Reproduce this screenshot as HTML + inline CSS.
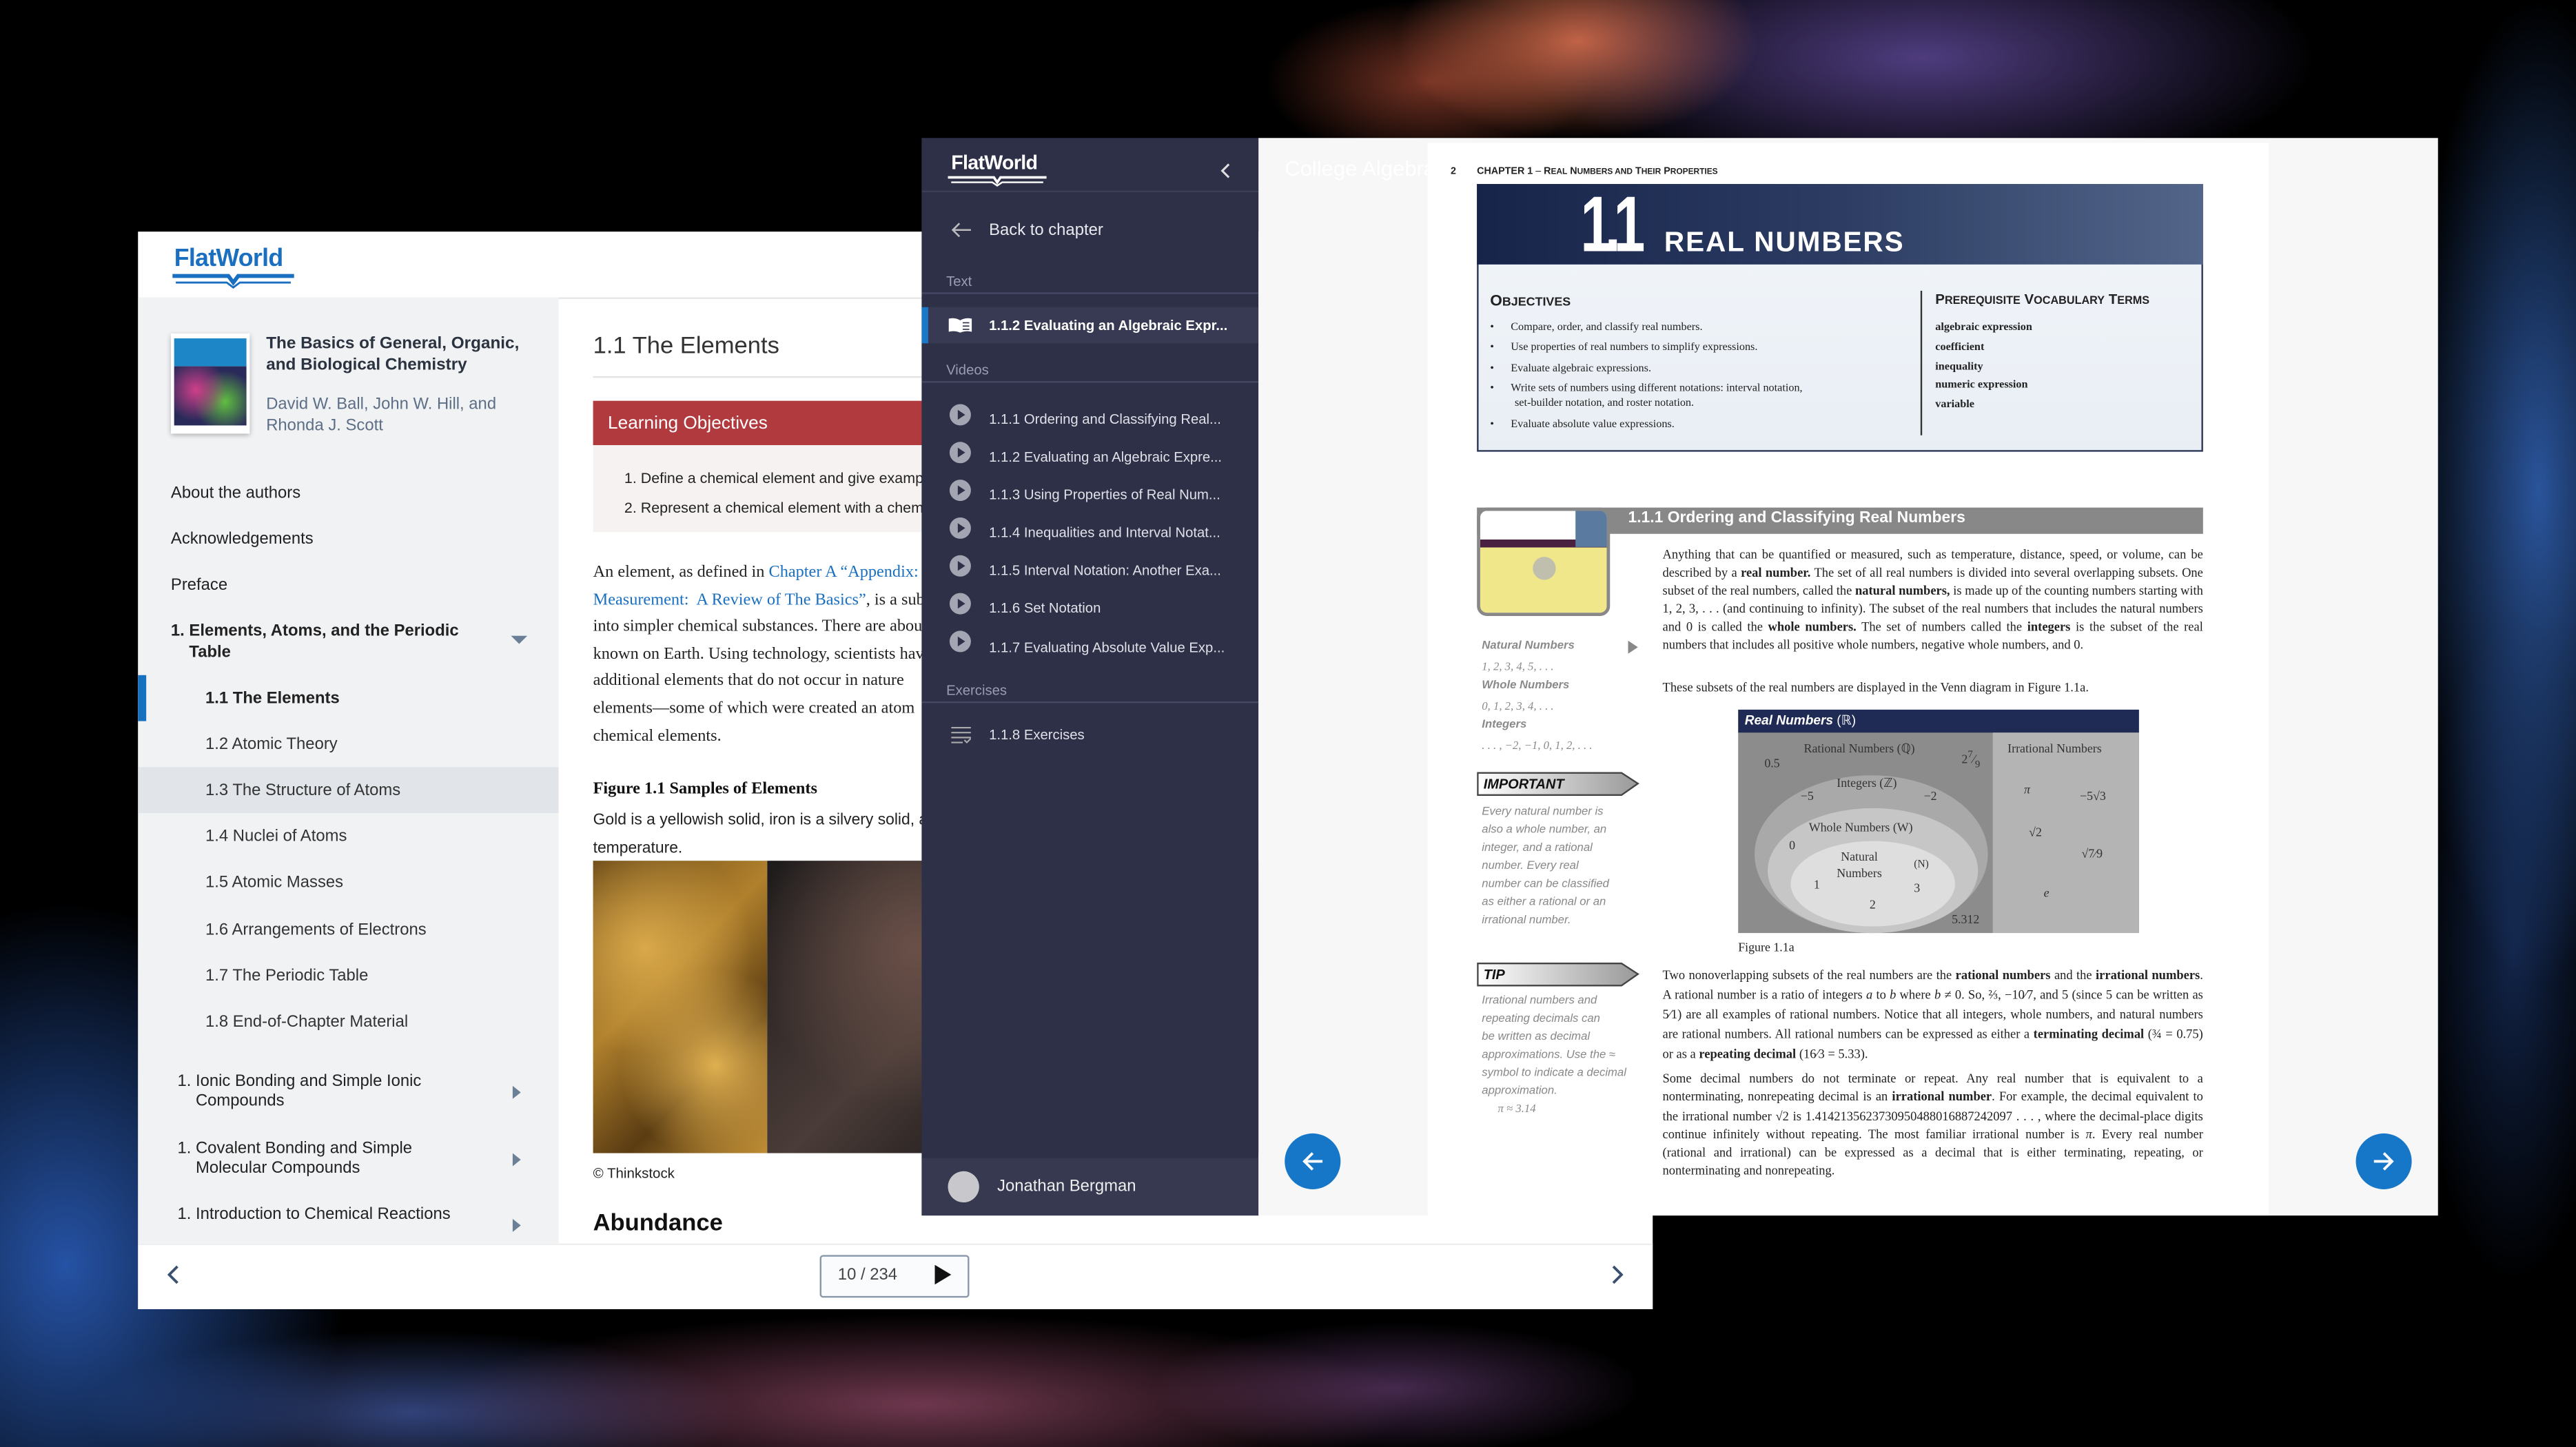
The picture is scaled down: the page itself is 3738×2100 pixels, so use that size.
<!DOCTYPE html>
<html><head><meta charset="utf-8">
<style>
*{margin:0;padding:0;box-sizing:border-box}
html,body{width:3738px;height:2100px;overflow:hidden;background:#000}
#s{position:absolute;left:0;top:0;width:1568px;height:881px;transform:scale(2.38393);transform-origin:0 0;overflow:hidden;font-family:"Liberation Sans",sans-serif;
background:
radial-gradient(ellipse 110px 60px at 960px 25px,rgba(255,130,90,.75),transparent),
radial-gradient(ellipse 240px 80px at 1170px 35px,rgba(130,100,210,.6),transparent),
radial-gradient(ellipse 100px 50px at 870px 50px,rgba(230,100,70,.5),transparent),
radial-gradient(ellipse 80px 300px at 1545px 300px,rgba(60,120,220,.7),transparent),
radial-gradient(ellipse 60px 200px at 1530px 580px,rgba(40,80,160,.45),transparent),
radial-gradient(ellipse 170px 220px at 40px 770px,rgba(50,110,220,.75),transparent),
radial-gradient(ellipse 300px 55px at 560px 855px,rgba(200,100,140,.55),transparent),
radial-gradient(ellipse 200px 50px at 250px 860px,rgba(90,120,220,.55),transparent),
radial-gradient(ellipse 150px 40px at 850px 845px,rgba(150,90,170,.45),transparent),
#000}
.a{position:absolute;white-space:nowrap}
.srf{font-family:"Liberation Serif",serif}
</style></head><body><div id="s">

<!-- LEFT WINDOW -->
<div class="a" style="left:84px;top:141px;width:922px;height:656px;background:#fff;overflow:hidden">
  <div class="a" style="left:22px;top:8px;font-size:15px;font-weight:bold;color:#1a6fc0;letter-spacing:-.3px">FlatWorld</div>
  <svg class="a" style="left:19px;top:25px" width="78" height="10" viewBox="0 0 78 10"><path d="M2 2 L36 2 L39 6 L42 2 L76 2" stroke="#1a6fc0" stroke-width="2.4" fill="none"/><path d="M4 6 L35 6 L39 9 L43 6 L74 6" stroke="#1a6fc0" stroke-width="1.2" fill="none"/></svg>
  <div class="a" style="left:0;top:40px;width:256px;height:576px;background:#f1f2f4"></div>
  <div class="a" style="left:256px;top:40px;width:666px;height:1px;background:#e6e6e6"></div>
  <div class="a" style="left:20px;top:62px;width:48px;height:61px;background:#fff;box-shadow:0 1px 3px rgba(0,0,0,.3)">
    <div class="a" style="left:2px;top:3px;width:44px;height:17px;background:#1d86c7"></div>
    <div class="a" style="left:2px;top:20px;width:44px;height:36px;background:radial-gradient(circle at 30% 40%,#d0408a,transparent 50%),radial-gradient(circle at 70% 60%,#60c040,transparent 50%),#2a2a5a"></div>
  </div>
  <div class="a" style="left:78px;top:63px;font-size:10.2px;font-weight:bold;color:#2c3340;line-height:12.5px">The Basics of General, Organic,<br>and Biological Chemistry</div>
  <div class="a" style="left:78px;top:100px;font-size:10px;color:#5d6f86;line-height:12.5px">David W. Ball, John W. Hill, and<br>Rhonda J. Scott</div>
  <div class="a" style="left:20px;top:154px;font-size:10px;color:#222">About the authors</div>
  <div class="a" style="left:20px;top:182px;font-size:10px;color:#222">Acknowledgements</div>
  <div class="a" style="left:20px;top:210px;font-size:10px;color:#222">Preface</div>
  <div class="a" style="left:20px;top:238px;font-size:10px;font-weight:bold;color:#222;line-height:12.5px">1. Elements, Atoms, and the Periodic<br>&nbsp;&nbsp;&nbsp;&nbsp;Table</div>
  <svg class="a" style="left:227px;top:246px" width="10" height="6"><path d="M0 0 L10 0 L5 5Z" fill="#6b7f96"/></svg>
  <div class="a" style="left:0;top:270px;width:5px;height:28px;background:#1570c0"></div>
  <div class="a" style="left:0;top:326px;width:256px;height:28px;background:#e1e4e8"></div>
  <div class="a" style="left:41px;top:279px;font-size:10px;font-weight:bold;color:#222">1.1 The Elements</div>
  <div class="a" style="left:41px;top:307px;font-size:10px;color:#333">1.2 Atomic Theory</div>
  <div class="a" style="left:41px;top:335px;font-size:10px;color:#333">1.3 The Structure of Atoms</div>
  <div class="a" style="left:41px;top:363px;font-size:10px;color:#333">1.4 Nuclei of Atoms</div>
  <div class="a" style="left:41px;top:391px;font-size:10px;color:#333">1.5 Atomic Masses</div>
  <div class="a" style="left:41px;top:420px;font-size:10px;color:#333">1.6 Arrangements of Electrons</div>
  <div class="a" style="left:41px;top:448px;font-size:10px;color:#333">1.7 The Periodic Table</div>
  <div class="a" style="left:41px;top:476px;font-size:10px;color:#333">1.8 End-of-Chapter Material</div>
  <div class="a" style="left:24px;top:512px;font-size:10px;color:#222;line-height:12px">1. Ionic Bonding and Simple Ionic<br>&nbsp;&nbsp;&nbsp;&nbsp;Compounds</div>
  <div class="a" style="left:24px;top:553px;font-size:10px;color:#222;line-height:12px">1. Covalent Bonding and Simple<br>&nbsp;&nbsp;&nbsp;&nbsp;Molecular Compounds</div>
  <div class="a" style="left:24px;top:593px;font-size:10px;color:#222">1. Introduction to Chemical Reactions</div>
  <svg class="a" style="left:228px;top:520px" width="6" height="8"><path d="M0 0 L5 4 L0 8Z" fill="#6b7f96"/></svg>
  <svg class="a" style="left:228px;top:561px" width="6" height="8"><path d="M0 0 L5 4 L0 8Z" fill="#6b7f96"/></svg>
  <svg class="a" style="left:228px;top:601px" width="6" height="8"><path d="M0 0 L5 4 L0 8Z" fill="#6b7f96"/></svg>
  <div class="a" style="left:277px;top:62px;font-size:14.5px;color:#333">1.1 The Elements</div>
  <div class="a" style="left:277px;top:88px;width:400px;height:1px;background:#e3e3e3"></div>
  <div class="a" style="left:277px;top:103px;width:400px;height:27px;background:#b13a3f"></div>
  <div class="a" style="left:286px;top:111px;font-size:11px;color:#fff">Learning Objectives</div>
  <div class="a" style="left:277px;top:130px;width:400px;height:53px;background:#f7f2f2"></div>
  <div class="a" style="left:296px;top:145px;font-size:9px;color:#222">1. Define a chemical element and give examples</div>
  <div class="a" style="left:296px;top:163px;font-size:9px;color:#222">2. Represent a chemical element with a chemical symbol</div>
  <div class="a srf" style="left:277px;top:200px;font-size:10.2px;color:#222;line-height:16.6px">An element, as defined in <span style="color:#1a6fc0">Chapter A “Appendix:</span><br><span style="color:#1a6fc0">Measurement:&nbsp; A Review of The Basics”</span>, is a substance<br>into simpler chemical substances. There are about<br>known on Earth. Using technology, scientists have<br>additional elements that do not occur in nature<br>elements—some of which were created an atom<br>chemical elements.</div>
  <div class="a srf" style="left:277px;top:334px;font-size:10.2px;font-weight:bold;color:#111">Figure 1.1 Samples of Elements</div>
  <div class="a" style="left:277px;top:351px;font-size:9.6px;color:#222;line-height:16.6px">Gold is a yellowish solid, iron is a silvery solid, and<br>temperature.</div>
  <div class="a" style="left:277px;top:383px;width:106px;height:178px;background:radial-gradient(circle at 30% 30%,#d9a84a,transparent 45%),radial-gradient(circle at 70% 70%,#e0b050,transparent 40%),linear-gradient(135deg,#6a4a18,#b0802c 40%,#5a3c12 70%,#c08e34)"></div>
  <div class="a" style="left:383px;top:383px;width:300px;height:178px;background:radial-gradient(circle at 30% 30%,#6a5048,transparent 40%),radial-gradient(circle at 60% 70%,#504a4a,transparent 40%),linear-gradient(135deg,#1c1a1a,#4a3c38 40%,#1a1818 70%,#3a3030)"></div>
  <div class="a" style="left:277px;top:568px;font-size:8.6px;color:#222">© Thinkstock</div>
  <div class="a" style="left:277px;top:596px;font-size:14.5px;font-weight:bold;color:#111">Abundance</div>
  <div class="a" style="left:0;top:616px;width:922px;height:40px;background:#fff;border-top:1px solid #eee"></div>
  <svg class="a" style="left:18px;top:629px" width="8" height="12"><path d="M6 1 L1 6 L6 11" stroke="#3a5070" stroke-width="1.6" fill="none"/></svg>
  <svg class="a" style="left:896px;top:629px" width="8" height="12"><path d="M2 1 L7 6 L2 11" stroke="#3a5070" stroke-width="1.6" fill="none"/></svg>
  <div class="a" style="left:415px;top:623px;width:91px;height:26px;border:1px solid #8898aa;border-radius:2px;background:#fafbfc"></div>
  <div class="a" style="left:426px;top:630px;font-size:10px;color:#444">10 / 234</div>
  <svg class="a" style="left:485px;top:629px" width="10" height="12"><path d="M0 0 L10 6 L0 12Z" fill="#111"/></svg>
</div>

<!-- RIGHT READER -->
<div class="a" style="left:766px;top:84px;width:718px;height:656px;background:#f7f7f7;overflow:hidden">
  <div class="a" style="left:16px;top:11px;font-size:13px;color:#fff">College Algebra</div>
  <div class="a" style="left:103px;top:3px;width:512px;height:653px;background:#fff"></div>
  <div class="a" style="left:16px;top:606px;width:34px;height:34px;border-radius:50%;background:#1676c8"></div>
  <svg class="a" style="left:25px;top:615px" width="16" height="16"><path d="M14 8 H3 M8 3 L3 8 L8 13" stroke="#fff" stroke-width="1.6" fill="none"/></svg>
  <div class="a" style="left:668px;top:606px;width:34px;height:34px;border-radius:50%;background:#1676c8"></div>
  <svg class="a" style="left:677px;top:615px" width="16" height="16"><path d="M2 8 H13 M8 3 L13 8 L8 13" stroke="#fff" stroke-width="1.6" fill="none"/></svg>
</div>

<!-- PAGE CONTENT -->
<div class="a" style="left:883px;top:102px;font-size:6px;font-weight:bold;color:#222">2</div>
<div class="a" style="left:899px;top:102px;font-size:6px;font-weight:bold;color:#222">CHAPTER 1 <span style="font-weight:normal">–</span> R<span style="font-size:5px">EAL</span> N<span style="font-size:5px">UMBERS AND</span> T<span style="font-size:5px">HEIR</span> P<span style="font-size:5px">ROPERTIES</span></div>
<div class="a" style="left:899px;top:112px;width:442px;height:163px;border:1px solid #2a3656;background:linear-gradient(180deg,#f2f6fa,#e9eef5)"></div>
<div class="a" style="left:899px;top:112px;width:442px;height:49px;background:linear-gradient(90deg,#17244a,#2c3c62 50%,#53668a)"></div>
<div class="a" style="left:962px;top:110px;font-size:48px;font-weight:bold;color:#fff;letter-spacing:-6px;transform:scaleX(.72);transform-origin:left">1.1</div>
<div class="a" style="left:1013px;top:138px;font-size:17px;font-weight:bold;color:#fff;letter-spacing:.8px">REAL NUMBERS</div>
<div class="a" style="left:907px;top:178px;font-size:9.5px;font-weight:bold;color:#222">O<span style="font-size:7.5px">BJECTIVES</span></div>
<div class="a srf" style="left:907px;top:194px;font-size:6.8px;color:#222;line-height:12.4px">•&nbsp;&nbsp;&nbsp;&nbsp;&nbsp;&nbsp;Compare, order, and classify real numbers.<br>•&nbsp;&nbsp;&nbsp;&nbsp;&nbsp;&nbsp;Use properties of real numbers to simplify expressions.<br>•&nbsp;&nbsp;&nbsp;&nbsp;&nbsp;&nbsp;Evaluate algebraic expressions.<br>•&nbsp;&nbsp;&nbsp;&nbsp;&nbsp;&nbsp;Write sets of numbers using different notations: interval notation,</div>
<div class="a srf" style="left:922px;top:242px;font-size:6.8px;color:#222">set-builder notation, and roster notation.</div>
<div class="a srf" style="left:907px;top:255px;font-size:6.8px;color:#222">•&nbsp;&nbsp;&nbsp;&nbsp;&nbsp;&nbsp;Evaluate absolute value expressions.</div>
<div class="a" style="left:1169px;top:177px;width:1px;height:88px;background:#333"></div>
<div class="a" style="left:1178px;top:177px;font-size:8.6px;font-weight:bold;color:#222">P<span style="font-size:6.8px">REREQUISITE</span> V<span style="font-size:6.8px">OCABULARY</span> T<span style="font-size:6.8px">ERMS</span></div>
<div class="a srf" style="left:1178px;top:194px;font-size:6.8px;font-weight:bold;color:#222;line-height:11.8px">algebraic expression<br>coefficient<br>inequality<br>numeric expression<br>variable</div>

<div class="a" style="left:899px;top:309px;width:442px;height:16px;background:#888"></div>
<div class="a" style="left:991px;top:310px;font-size:9.6px;font-weight:bold;color:#fff">1.1.1 Ordering and Classifying Real Numbers</div>
<div class="a" style="left:899px;top:309px;width:81px;height:66px;border-radius:6px;border:2px solid #888;background:linear-gradient(180deg,#fff 0 28%,#4a2040 28% 36%,#f0e68a 36%);overflow:hidden">
  <div class="a" style="left:58px;top:0;width:20px;height:22px;background:#5a7aa0"></div>
  <div class="a" style="left:32px;top:28px;width:14px;height:14px;border-radius:50%;background:rgba(180,180,180,.8)"></div>
</div>
<div class="a" style="left:902px;top:388px;font-size:7px;font-style:italic;font-weight:bold;color:#8a8a8a;line-height:12px">Natural Numbers<br><span class="srf" style="font-weight:normal">1, 2, 3, 4, 5, . . .</span></div>
<div class="a" style="left:902px;top:412px;font-size:7px;font-style:italic;font-weight:bold;color:#8a8a8a;line-height:12px">Whole Numbers<br><span class="srf" style="font-weight:normal">0, 1, 2, 3, 4, . . .</span></div>
<div class="a" style="left:902px;top:436px;font-size:7px;font-style:italic;font-weight:bold;color:#8a8a8a;line-height:12px">Integers<br><span class="srf" style="font-weight:normal">. . . , −2, −1, 0, 1, 2, . . .</span></div>
<svg class="a" style="left:991px;top:390px" width="6" height="8"><path d="M0 0 L6 4 L0 8Z" fill="#888"/></svg>
<svg class="a" style="left:899px;top:470px" width="100" height="15"><defs><linearGradient id="g"><stop offset="0" stop-color="#fff"/><stop offset="1" stop-color="#999"/></linearGradient></defs><path d="M0.5 0.5 H88 L98 7 L88 14 H0.5Z" fill="url(#g)" stroke="#444"/></svg>
<div class="a" style="left:903px;top:472px;font-size:8.4px;font-weight:bold;font-style:italic;color:#111">IMPORTANT</div>
<div class="a" style="left:902px;top:489px;font-size:7px;font-style:italic;color:#888;line-height:11px">Every natural number is<br>also a whole number, an<br>integer, and a rational<br>number. Every real<br>number can be classified<br>as either a rational or an<br>irrational number.</div>
<svg class="a" style="left:899px;top:586px" width="100" height="15"><path d="M0.5 0.5 H88 L98 7 L88 14 H0.5Z" fill="url(#g)" stroke="#444"/></svg>
<div class="a" style="left:903px;top:588px;font-size:8.4px;font-weight:bold;font-style:italic;color:#111">TIP</div>
<div class="a" style="left:902px;top:604px;font-size:7px;font-style:italic;color:#888;line-height:11px">Irrational numbers and<br>repeating decimals can<br>be written as decimal<br>approximations. Use the ≈<br>symbol to indicate a decimal<br>approximation.<br>&nbsp;&nbsp;&nbsp;&nbsp;&nbsp;<span class="srf">π ≈ 3.14</span></div>

<div class="a srf" style="left:1012px;top:333px;width:329px;font-size:7.75px;color:#222;line-height:10.9px;white-space:normal;text-align:justify">Anything that can be quantified or measured, such as temperature, distance, speed, or volume, can be described by a <b>real number.</b> The set of all real numbers is divided into several overlapping subsets. One subset of the real numbers, called the <b>natural numbers,</b> is made up of the counting numbers starting with 1, 2, 3, . . . (and continuing to infinity). The subset of the real numbers that includes the natural numbers and 0 is called the <b>whole numbers.</b> The set of numbers called the <b>integers</b> is the subset of the real numbers that includes all positive whole numbers, negative whole numbers, and 0.</div>
<div class="a srf" style="left:1012px;top:414px;font-size:7.75px;color:#222">These subsets of the real numbers are displayed in the Venn diagram in Figure 1.1a.</div>
<div class="a" style="left:1058px;top:432px;width:244px;height:136px;background:#8c8c8c;overflow:hidden">
  <div class="a" style="left:0;top:0;width:244px;height:14px;background:#1f2a55"></div>
  <div class="a" style="left:4px;top:2px;font-size:8px;font-weight:bold;font-style:italic;color:#fff">Real Numbers <span style="font-weight:normal;font-style:normal">(ℝ)</span></div>
  <div class="a" style="left:155px;top:14px;width:89px;height:122px;background:#b4b4b4"></div>
  <div class="a" style="left:10px;top:40px;width:142px;height:96px;border-radius:50%;background:#a9a9a9"></div>
  <div class="a" style="left:18px;top:60px;width:128px;height:76px;border-radius:50%;background:#c6c6c6"></div>
  <div class="a" style="left:32px;top:80px;width:100px;height:52px;border-radius:50%;background:#dedede"></div>
  <div class="a srf" style="left:40px;top:19px;font-size:7.5px;color:#333">Rational Numbers (ℚ)</div>
  <div class="a srf" style="left:16px;top:28px;font-size:7.5px;color:#333">0.5</div>
  <div class="a srf" style="left:136px;top:24px;font-size:7.5px;color:#333">2<sup>7</sup>⁄<sub>9</sub></div>
  <div class="a srf" style="left:60px;top:40px;font-size:7.5px;color:#333">Integers (ℤ)</div>
  <div class="a srf" style="left:38px;top:48px;font-size:7.5px;color:#333">−5</div>
  <div class="a srf" style="left:113px;top:48px;font-size:7.5px;color:#333">−2</div>
  <div class="a srf" style="left:43px;top:67px;font-size:7.5px;color:#333">Whole Numbers (W)</div>
  <div class="a srf" style="left:31px;top:78px;font-size:7.5px;color:#333">0</div>
  <div class="a srf" style="left:60px;top:85px;font-size:7.5px;color:#333;line-height:10px;text-align:center">Natural<br>Numbers</div>
  <div class="a srf" style="left:107px;top:91px;font-size:6.5px;color:#333">(N)</div>
  <div class="a srf" style="left:46px;top:102px;font-size:7.5px;color:#333">1</div>
  <div class="a srf" style="left:107px;top:104px;font-size:7.5px;color:#333">3</div>
  <div class="a srf" style="left:80px;top:114px;font-size:7.5px;color:#333">2</div>
  <div class="a srf" style="left:130px;top:123px;font-size:7.5px;color:#333">5.312</div>
  <div class="a srf" style="left:164px;top:19px;font-size:7.5px;color:#333">Irrational Numbers</div>
  <div class="a srf" style="left:174px;top:44px;font-size:7.5px;font-style:italic;color:#333">π</div>
  <div class="a srf" style="left:208px;top:48px;font-size:7.5px;color:#333">−5√3</div>
  <div class="a srf" style="left:177px;top:70px;font-size:7.5px;color:#333">√2</div>
  <div class="a srf" style="left:209px;top:83px;font-size:7.5px;color:#333">√7⁄9</div>
  <div class="a srf" style="left:186px;top:107px;font-size:7.5px;font-style:italic;color:#333">e</div>
</div>
<div class="a srf" style="left:1058px;top:572px;font-size:7.5px;color:#222">Figure 1.1a</div>
<div class="a srf" style="left:1012px;top:588px;width:329px;font-size:7.75px;color:#222;line-height:11.9px;white-space:normal;text-align:justify">Two nonoverlapping subsets of the real numbers are the <b>rational numbers</b> and the <b>irrational numbers</b>. A rational number is a ratio of integers <i>a</i> to <i>b</i> where <i>b</i> ≠ 0. So, ⅔, −10⁄7, and 5 (since 5 can be written as 5⁄1) are all examples of rational numbers. Notice that all integers, whole numbers, and natural numbers are rational numbers. All rational numbers can be expressed as either a <b>terminating decimal</b> (¾ = 0.75) or as a <b>repeating decimal</b> (16⁄3 = 5.33).</div>
<div class="a srf" style="left:1012px;top:651px;width:329px;font-size:7.75px;color:#222;line-height:11.3px;white-space:normal;text-align:justify">Some decimal numbers do not terminate or repeat. Any real number that is equivalent to a nonterminating, nonrepeating decimal is an <b>irrational number</b>. For example, the decimal equivalent to the irrational number √2 is 1.4142135623730950488016887242097 . . . , where the decimal-place digits continue infinitely without repeating. The most familiar irrational number is <i>π</i>. Every real number (rational and irrational) can be expressed as a decimal that is either terminating, repeating, or nonterminating and nonrepeating.</div>

<!-- DARK PANEL -->
<div class="a" style="left:561px;top:84px;width:205px;height:656px;background:#2e3047;overflow:hidden">
  <div class="a" style="left:18px;top:8px;font-size:12px;font-weight:bold;color:#fff;letter-spacing:-.3px">FlatWorld</div>
  <svg class="a" style="left:15px;top:22px" width="62" height="8"><path d="M1 2 L29 2 L31 5 L33 2 L61 2" stroke="#fff" stroke-width="1.5" fill="none"/><path d="M3 5 L28 5 L31 7 L34 5 L59 5" stroke="#fff" stroke-width="1" fill="none"/></svg>
  <svg class="a" style="left:181px;top:15px" width="8" height="10"><path d="M6 1 L2 5 L6 9" stroke="#ddd" stroke-width="1.3" fill="none"/></svg>
  <div class="a" style="left:0;top:32px;width:205px;height:1px;background:#3c3f58"></div>
  <svg class="a" style="left:17px;top:51px" width="14" height="10"><path d="M13 5 H2 M6 1 L2 5 L6 9" stroke="#bbb" stroke-width="1.1" fill="none"/></svg>
  <div class="a" style="left:41px;top:51px;font-size:10px;color:#e8e8ee">Back to chapter</div>
  <div class="a" style="left:15px;top:82px;font-size:8.5px;color:#9a9cb3">Text</div>
  <div class="a" style="left:0;top:94px;width:205px;height:1px;background:#454862"></div>
  <div class="a" style="left:0;top:103px;width:205px;height:22px;background:#373a52"></div>
  <div class="a" style="left:0;top:103px;width:4px;height:22px;background:#1a78c8"></div>
  <svg class="a" style="left:16px;top:109px" width="15" height="10"><path d="M0.5 1 Q4 0 7.5 2 Q11 0 14.5 1 V9 Q11 8 7.5 9.5 Q4 8 0.5 9Z" fill="#fff"/><path d="M9 3.5 H13 M9 5.5 H13 M9 7.5 H13" stroke="#2e3047" stroke-width=".7"/></svg>
  <div class="a" style="left:41px;top:109px;font-size:8.5px;font-weight:bold;color:#fff">1.1.2 Evaluating an Algebraic Expr...</div>
  <div class="a" style="left:15px;top:136px;font-size:8.5px;color:#9a9cb3">Videos</div>
  <div class="a" style="left:0;top:148px;width:205px;height:1px;background:#454862"></div>
  <div class="a" style="left:17px;top:162px;width:13px;height:13px;border-radius:50%;background:#a4a5b2"></div>
  <div class="a" style="left:17px;top:185px;width:13px;height:13px;border-radius:50%;background:#a4a5b2"></div>
  <div class="a" style="left:17px;top:208px;width:13px;height:13px;border-radius:50%;background:#a4a5b2"></div>
  <div class="a" style="left:17px;top:231px;width:13px;height:13px;border-radius:50%;background:#a4a5b2"></div>
  <div class="a" style="left:17px;top:254px;width:13px;height:13px;border-radius:50%;background:#a4a5b2"></div>
  <div class="a" style="left:17px;top:277px;width:13px;height:13px;border-radius:50%;background:#a4a5b2"></div>
  <div class="a" style="left:17px;top:300px;width:13px;height:13px;border-radius:50%;background:#a4a5b2"></div>
  <svg class="a" style="left:17px;top:162px" width="13" height="152"><g fill="#2e3047"><path d="M5 3.5 L9.5 6.5 L5 9.5Z"/><path d="M5 26.5 L9.5 29.5 L5 32.5Z"/><path d="M5 49.5 L9.5 52.5 L5 55.5Z"/><path d="M5 72.5 L9.5 75.5 L5 78.5Z"/><path d="M5 95.5 L9.5 98.5 L5 101.5Z"/><path d="M5 118.5 L9.5 121.5 L5 124.5Z"/><path d="M5 141.5 L9.5 144.5 L5 147.5Z"/></g></svg>
  <div class="a" style="left:41px;top:160px;font-size:8.5px;color:#e0e0e8;line-height:23.1px">1.1.1 Ordering and Classifying Real...<br>1.1.2 Evaluating an Algebraic Expre...<br>1.1.3 Using Properties of Real Num...<br>1.1.4 Inequalities and Interval Notat...<br>1.1.5 Interval Notation: Another Exa...<br>1.1.6 Set Notation<br>1.1.7 Evaluating Absolute Value Exp...</div>
  <div class="a" style="left:15px;top:331px;font-size:8.5px;color:#9a9cb3">Exercises</div>
  <div class="a" style="left:0;top:343px;width:205px;height:1px;background:#454862"></div>
  <svg class="a" style="left:18px;top:358px" width="12" height="11"><path d="M0 1 H12 M0 4 H12 M0 7 H12 M0 10 H7 M8 8.5 L9.5 10 L12 7.5" stroke="#aaa" stroke-width=".9" fill="none"/></svg>
  <div class="a" style="left:41px;top:358px;font-size:8.5px;color:#e0e0e8">1.1.8 Exercises</div>
  <div class="a" style="left:0;top:621px;width:205px;height:35px;background:#363950"></div>
  <div class="a" style="left:16px;top:629px;width:19px;height:19px;border-radius:50%;background:#c8c8cc"></div>
  <div class="a" style="left:46px;top:633px;font-size:10px;color:#eee">Jonathan Bergman</div>
</div>

</div></body></html>
